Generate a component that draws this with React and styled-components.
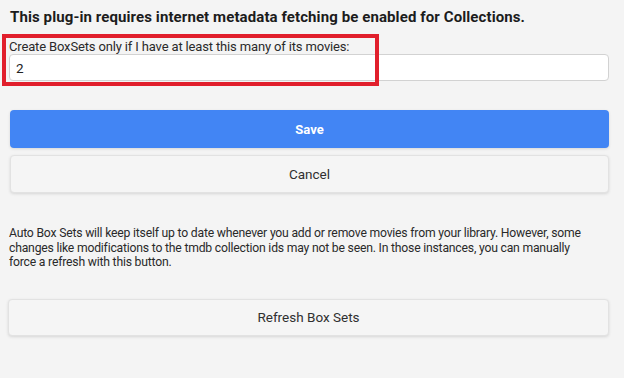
import React from "react";
import styled, { createGlobalStyle } from "styled-components";

const Global = createGlobalStyle`
  html, body { margin: 0; padding: 0; background: #f4f4f4; }
  body { font-family: Roboto, "Noto Sans", sans-serif; color: #222; }
  * { box-sizing: border-box; }
`;

const Page = styled.div`
  width: 624px;
  height: 378px;
  padding: 8px 15px 0 9px;
  display: flex;
  flex-direction: column;
  overflow: hidden;
`;

const Heading = styled.h3`
  margin: 0 0 0 1px;
  font-size: 15px;
  font-weight: 700;
  line-height: 18px;
  letter-spacing: 0.1px;
  color: #1c1c1c;
`;

const Field = styled.div`
  position: relative;
  margin-top: 11px;
  display: flex;
  flex-direction: column;
`;

const Label = styled.label`
  font-size: 13px;
  line-height: 15px;
  letter-spacing: -0.15px;
  color: #2a2a2a;
  margin-top: 2px;
`;

const Input = styled.input`
  height: 27px;
  width: 100%;
  border: 1px solid #d2d2d2;
  border-radius: 4px;
  background: #fff;
  padding: 0 6px;
  font-family: Roboto, sans-serif;
  font-size: 13.5px;
  color: #222;
  outline: none;
`;

const Highlight = styled.div`
  position: absolute;
  left: -7px;
  top: -3px;
  width: 377px;
  height: 52px;
  border: 4px solid #e11f2c;
  pointer-events: none;
`;

const Buttons = styled.div`
  margin-top: 29px;
  display: flex;
  flex-direction: column;
  gap: 7px;
`;

const Button = styled.button`
  height: ${(p) => (p.$wide ? "37px" : "38px")};
  width: ${(p) => (p.$wide ? "601px" : "599px")};
  margin-left: ${(p) => (p.$wide ? "-1px" : "1px")};
  border-radius: 4px;
  font-family: Roboto, sans-serif;
  font-size: ${(p) => (p.$primary ? "13px" : "13.5px")};
  font-weight: ${(p) => (p.$primary ? 700 : 400)};
  color: ${(p) => (p.$primary ? "#fff" : "#303030")};
  background: ${(p) => (p.$primary ? "#4285f4" : "#f5f5f5")};
  border: ${(p) => (p.$primary ? "none" : "1px solid #e2e2e2")};
  box-shadow: 0 1px 3px rgba(0, 0, 0, 0.12);
  cursor: pointer;
`;

const Note = styled.p`
  margin: 33px 0 0 0;
  font-size: 12.2px;
  line-height: 14.5px;
  color: #2a2a2a;
  letter-spacing: -0.2px;
  width: 590px;
`;

const RefreshRow = styled.div`
  margin-top: 29px;
`;

export default function App() {
  return (
    <>
      <Global />
      <Page>
        <Heading>This plug-in requires internet metadata fetching be enabled for Collections.</Heading>
        <Field>
          <Label htmlFor="minMovies">Create BoxSets only if I have at least this many of its movies:</Label>
          <Input id="minMovies" defaultValue="2" />
          <Highlight />
        </Field>
        <Buttons>
          <Button $primary>Save</Button>
          <Button>Cancel</Button>
        </Buttons>
        <Note>
          Auto Box Sets will keep itself up to date whenever you add or remove movies from your library. However, some
          changes like modifications to the tmdb collection ids may not be seen. In those instances, you can manually
          force a refresh with this button.
        </Note>
        <RefreshRow>
          <Button $wide>Refresh Box Sets</Button>
        </RefreshRow>
      </Page>
    </>
  );
}
